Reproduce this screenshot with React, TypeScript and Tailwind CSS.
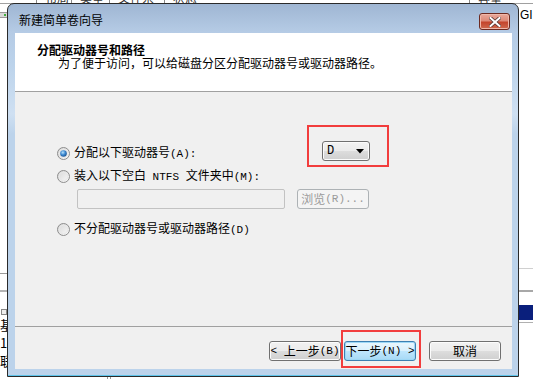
import type { ReactNode } from 'react';

const cjk = { fontFamily: "'Noto Sans CJK SC', sans-serif" };
const mono = { fontFamily: "'Liberation Mono', monospace" };

// half-width latin run, like SimSun's narrow Latin glyphs
const L = ({ children }: { children: ReactNode }) => (
  <span className="text-[11px] whitespace-pre" style={mono}>
    {children}
  </span>
);

const Radio = ({ checked = false }: { checked?: boolean }) => (
  <svg width="13" height="13" viewBox="0 0 13 13" className="shrink-0">
    <defs>
      <linearGradient id="rbg" x1="0" y1="0" x2="1" y2="1">
        <stop offset="0" stopColor="#d6d6d6" />
        <stop offset="1" stopColor="#fbfbfb" />
      </linearGradient>
      <radialGradient id="rdot" cx="0.4" cy="0.35" r="0.7">
        <stop offset="0" stopColor="#b9e2fb" />
        <stop offset="0.5" stopColor="#3d8ad2" />
        <stop offset="1" stopColor="#1a4f8d" />
      </radialGradient>
    </defs>
    <circle cx="6.5" cy="6.5" r="6" fill="url(#rbg)" stroke="#8d8d8d" />
    <circle cx="6.5" cy="6.5" r="4.2" fill="none" stroke="#e8e8e8" />
    {checked && <circle cx="6.5" cy="6.5" r="3.3" fill="url(#rdot)" />}
  </svg>
);

const WinButton = ({ children, focused = false }: { children: ReactNode; focused?: boolean }) => (
  <div
    className={`w-[72px] h-[20px] rounded-[3px] border flex items-center justify-center whitespace-nowrap text-[12px] leading-none text-black ${
      focused
        ? 'border-[#3c7fb1] bg-[linear-gradient(180deg,#eaf6fd_0%,#d9f0fc_50%,#bee6fd_51%,#a7d9f5_100%)] shadow-[inset_0_0_0_1px_#9ed8f6]'
        : 'border-[#707070] bg-[linear-gradient(180deg,#f2f2f2_0%,#ebebeb_50%,#dddddd_51%,#cfcfcf_100%)] shadow-[inset_0_0_0_1px_#fcfcfc]'
    }`}
  >
    {children}
  </div>
);

export default function App() {
  return (
    <div className="relative w-[533px] h-[379px] bg-white overflow-hidden" style={cjk}>
      {/* app behind the dialog */}
      <div className="absolute left-0 top-0 w-[533px] h-[4px] overflow-hidden border-b border-[#a0a0a0]">
        <div className="flex -mt-[9px] text-[12px] text-[#333] leading-[13px]">
          <span className="w-[37px] border-r border-[#888]">&nbsp;</span>
          <span className="w-[35px] border-r border-[#888] pl-2">布局</span>
          <span className="w-[38px] border-r border-[#888] pl-2">类型</span>
          <span className="w-[55px] border-r border-[#888] pl-2">文件系统</span>
          <span className="w-[305px] border-r border-[#888] pl-2">状态</span>
          <span className="w-[35px] pl-2">容量</span>
        </div>
      </div>
      <div className="absolute left-0 top-[12px] w-[7px] h-[6px] bg-[#d8d8d8] border-y border-[#9a9a9a]">
        <div className="ml-[4px] mt-[1px] w-[2px] h-[2px] bg-[#3fae3f]" />
      </div>
      <div className="absolute left-0 top-[273px] w-[7px] h-[1px] bg-[#9a9a9a]" />
      <div className="absolute left-0 top-[290px] w-[7px] h-[2px] bg-[#b4b4b4]" />
      <div className="absolute left-[1px] top-[309px] w-[6px] h-[6px] border border-[#888] bg-[#eee]" />
      <div className="absolute left-0 top-[316px] flex flex-col text-[13px] leading-[18px] text-black">
        <span>基</span>
        <span>1</span>
        <span>联</span>
      </div>
      <div className="absolute left-[520px] top-[8px] text-[12px] leading-[14px] text-black" style={{ fontFamily: "'Liberation Sans', sans-serif" }}>
        GI
      </div>
      <div className="absolute left-[519px] top-[268px] w-[14px] h-[1px] bg-[#d0d0d0]" />
      <div className="absolute left-[519px] top-[290px] w-[14px] h-[2px] bg-[#a8a8a8]" />
      <div className="absolute left-[519px] top-[305px] w-[14px] h-[15px] bg-[#0a1f7c]" />
      <div className="absolute left-[519px] top-[322px] w-[14px] h-[1px] bg-[#b0b0b0]" />
      <div className="absolute left-[107px] top-[377px] w-[4px] h-[2px] border-x border-[#999]" />

      {/* dialog window */}
      <div className="absolute left-[7px] top-[3px] w-[512px] h-[374px] rounded-t-[7px] border border-[#2a2a2a] bg-[linear-gradient(180deg,#9fb6d3_0px,#b5cbe5_28px,#bcd3eb_60px,#cfe0f2_110px,#bcd3eb_130px,#bcd3eb_100%)] shadow-[inset_0_-1px_0_#5fc4ea] flex flex-col">
        <div className="h-[29px] flex items-start justify-between pl-[11px] pr-[8px]">
          <span className="mt-[9px] text-[12px] leading-[14px] text-black">新建简单卷向导</span>
          <div className="mt-[9px] w-[31px] h-[17px] rounded-[3px] border border-[#6d2a20] bg-[linear-gradient(180deg,#e9a99b_0%,#dd8a78_45%,#c4452c_55%,#cf6a4f_100%)] shadow-[inset_0_0_0_1px_#efb8aa] flex items-center justify-center">
            <svg width="12" height="10" viewBox="0 0 12 10">
              <path d="M1.5 1 L10.5 9 M10.5 1 L1.5 9" stroke="#5a3a36" strokeWidth="3.6" strokeLinecap="square" />
              <path d="M1.5 1 L10.5 9 M10.5 1 L1.5 9" stroke="#ffffff" strokeWidth="2" strokeLinecap="square" />
            </svg>
          </div>
        </div>
        <div className="flex-1 pl-[7px] pr-[6px] pb-[7px] flex">
          <div className="w-[497px] h-[336px] bg-[#f0f0f0] flex flex-col">
            {/* header */}
            <div className="h-[58px] bg-white pt-[10px] flex flex-col">
              <span className="pl-[22px] text-[12px] leading-[13px] font-bold text-black">分配驱动器号和路径</span>
              <span className="pl-[43px] text-[12px] leading-[14px] text-black">为了便于访问，可以给磁盘分区分配驱动器号或驱动器路径。</span>
            </div>
            <div className="h-[1px] bg-[#a0a0a0]" />

            {/* options */}
            <div className="flex-1 pl-[42px] pt-[51px] flex flex-col text-[12px] text-black">
              <div className="h-[20px] flex items-center">
                <div className="w-[265px] flex items-center gap-[4px]">
                  <Radio checked />
                  <span className="leading-none whitespace-nowrap">
                    分配以下驱动器号<L>(A):</L>
                  </span>
                </div>
                <div className="mb-[4px] w-[48px] h-[20px] rounded-[3px] border border-[#707070] bg-[linear-gradient(180deg,#f2f2f2_0%,#ebebeb_50%,#dddddd_51%,#cfcfcf_100%)] shadow-[inset_0_0_0_1px_#fbfbfb] flex items-center justify-between pl-[4px] pr-[5px]">
                  <span className="leading-none text-[12px]" style={mono}>D</span>
                  <svg width="8" height="5" viewBox="0 0 8 5">
                    <path d="M0 0 H8 L4 4.5 Z" fill="#000" />
                  </svg>
                </div>
              </div>
              <div className="mt-[3px] h-[20px] flex items-center gap-[4px]">
                <Radio />
                <span className="leading-none whitespace-nowrap">
                  装入以下空白<L> NTFS </L>文件夹中<L>(M):</L>
                </span>
              </div>
              <div className="mt-[3px] pl-[20px] flex items-center gap-[12px]">
                <div className="w-[208px] h-[20px] rounded-[2px] border border-[#c2c2c2] bg-[#f0f0f0]" />
                <div className="w-[72px] h-[20px] rounded-[3px] border border-[#adb2b5] bg-[#f4f4f4] flex items-center justify-center text-[#9a9a9a] leading-none whitespace-nowrap">
                  浏览<L>(R)...</L>
                </div>
              </div>
              <div className="mt-[10px] h-[20px] flex items-center gap-[4px]">
                <Radio />
                <span className="leading-none whitespace-nowrap">
                  不分配驱动器号或驱动器路径<L>(D)</L>
                </span>
              </div>
            </div>

            {/* footer */}
            <div className="h-[1px] bg-[#a0a0a0]" />
            <div className="pt-[14px] pb-[8px] pr-[11px] flex justify-end">
              <WinButton>
                <L>{'< '}</L>上一步<L>(B)</L>
              </WinButton>
              <div className="ml-[3px]">
                <WinButton focused>
                  下一步<L>{'(N) >'}</L>
                </WinButton>
              </div>
              <div className="ml-[13px]">
                <WinButton>取消</WinButton>
              </div>
            </div>
          </div>
        </div>
      </div>

      {/* red annotation boxes */}
      <div className="absolute left-[307px] top-[125px] w-[82px] h-[42px] border-2 border-[#f23d3d]" />
      <div className="absolute left-[341px] top-[330px] w-[80px] h-[38px] border-2 border-[#f23d3d]" />
    </div>
  );
}
